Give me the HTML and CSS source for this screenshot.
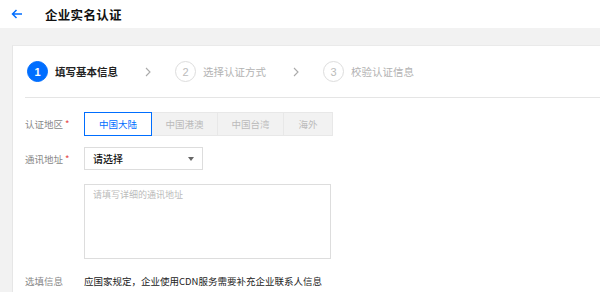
FILE: index.html
```html
<!DOCTYPE html>
<html lang="zh">
<head>
<meta charset="utf-8">
<link rel="stylesheet" href="styles.css">
</head>
<body>
<div class="header">
  <svg class="back" width="12" height="10" viewBox="0 0 12 10"><path d="M11 5H1.5M5.5 1L1.5 5l4 4" fill="none" stroke="#006eff" stroke-width="1.5"/></svg>
  <span class="title">企业实名认证</span>
</div>
<div class="page">
  <div class="card">
    <div class="steps">
      <div class="step active"><span class="num">1</span><span class="stext">填写基本信息</span></div>
      <svg class="chev" width="6" height="10" viewBox="0 0 6 10"><path d="M1 1l4 4-4 4" fill="none" stroke="#aaa" stroke-width="1.1"/></svg>
      <div class="step"><span class="num">2</span><span class="stext">选择认证方式</span></div>
      <svg class="chev" width="6" height="10" viewBox="0 0 6 10"><path d="M1 1l4 4-4 4" fill="none" stroke="#aaa" stroke-width="1.1"/></svg>
      <div class="step"><span class="num">3</span><span class="stext">校验认证信息</span></div>
    </div>
    <div class="form">
      <div class="row r1">
        <div class="label">认证地区<span class="req">*</span></div>
        <div class="seg">
          <span class="opt on">中国大陆</span>
          <span class="opt">中国港澳</span>
          <span class="opt">中国台湾</span>
          <span class="opt last">海外</span>
        </div>
      </div>
      <div class="row r2">
        <div class="label">通讯地址<span class="req">*</span></div>
        <div class="select"><span>请选择</span><span class="caret"></span></div>
      </div>
      <div class="row r3">
        <div class="label"></div>
        <div class="textarea">请填写详细的通讯地址</div>
      </div>
      <div class="row r4">
        <div class="label">选填信息</div>
        <div class="note">应国家规定，企业使用CDN服务需要补充企业联系人信息</div>
      </div>
    </div>
  </div>
</div>
</body>
</html>
```
FILE: styles.css
```css
html, body { margin: 0; padding: 0; }
body {
  width: 600px; height: 292px; overflow: hidden;
  background: #f2f2f2;
  font-family: "Noto Sans CJK SC", "Noto Sans", sans-serif;
  color: #333;
}
.header {
  height: 28px; background: #fff;
  display: flex; align-items: center;
  padding-left: 11px;
}
.back { margin-right: 22px; }
.title { font-size: 12.5px; font-weight: 700; color: #111; letter-spacing: 0.3px; }
.page { padding: 17px 0 0 12px; }
.card {
  background: #fff; height: 260px;
  border-left: 1px solid #e6e6e6;
  border-top: 1px solid #eaeaea;
  padding: 0 0 0 12px;
}
.steps {
  display: flex; align-items: center;
  height: 51px;
  border-bottom: 1px solid #e5e5e5;
  padding-left: 2px;
}
.step { display: flex; align-items: center; }
.num {
  width: 19px; height: 19px; border-radius: 50%;
  border: 1px solid #ddd; color: #bbb;
  font-size: 11px; font-family: "Liberation Sans", sans-serif;
  display: flex; align-items: center; justify-content: center;
  margin-right: 7px;
}
.step.active .num { background: #006eff; border-color: #006eff; color: #fff; font-weight: 700; }
.stext { font-size: 10.5px; color: #b3b3b3; }
.step.active .stext { color: #222; font-weight: 700; }
.chev { margin: 0 24px 0 27px; }
.form { padding-top: 14px; }
.row { display: flex; align-items: flex-start; }
.label { width: 59px; font-size: 9.5px; color: #888; line-height: 24px; }
.req { color: #e54545; margin-left: 2px; }
.seg { display: flex; height: 24px; }
.opt {
  box-sizing: border-box; height: 24px; line-height: 22px;
  background: #f2f2f2; color: #bbb; font-size: 9.5px;
  border: 1px solid #e8e8e8; border-left: none; text-align: center;
  width: 66px;
}
.opt.on { background: #fff; color: #006eff; border: 1px solid #006eff; width: 68px; }
.opt.last { width: 49px; }
.r2 { margin-top: 11px; }
.select {
  box-sizing: border-box; width: 119px; height: 23px;
  border: 1px solid #ddd; display: flex; align-items: center; justify-content: space-between;
  padding: 0 8px 0 8px; font-size: 10px; color: #111; font-weight: 500;
}
.caret { width: 0; height: 0; border-left: 3px solid transparent; border-right: 3px solid transparent; border-top: 4px solid #666; }
.r3 { margin-top: 13px; }
.textarea {
  box-sizing: border-box; width: 247px; height: 75px;
  border: 1px solid #ddd; padding: 3px 8px; font-size: 9px; color: #bbb;
}
.r4 { margin-top: 10px; }
.note { font-size: 9.5px; color: #222; line-height: 24px; }
```
